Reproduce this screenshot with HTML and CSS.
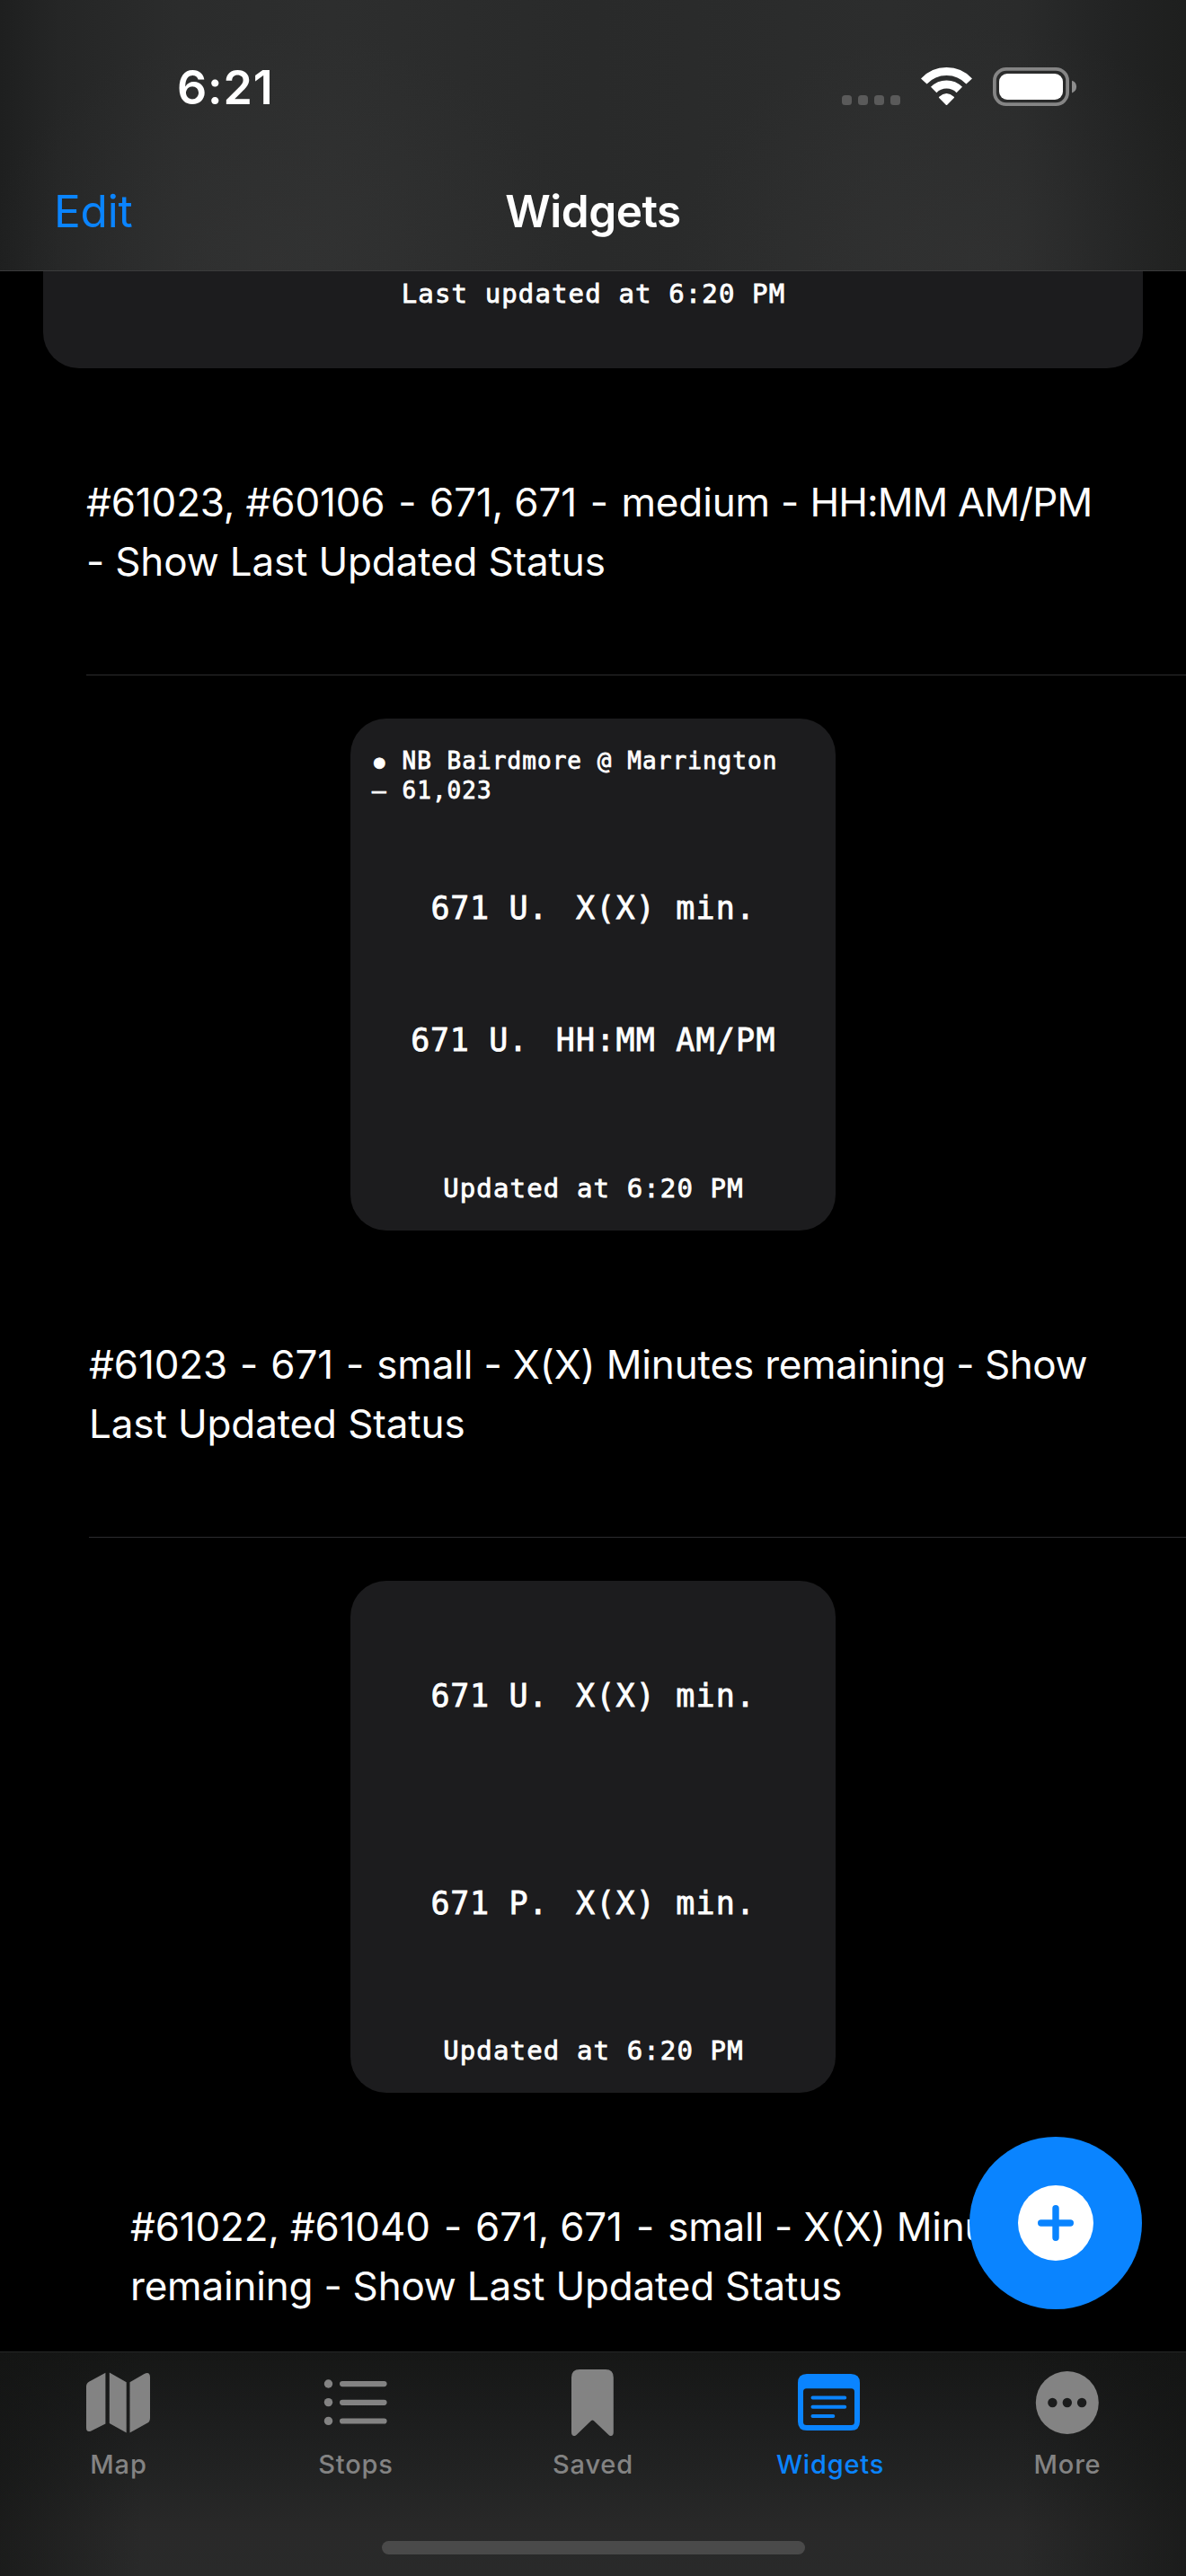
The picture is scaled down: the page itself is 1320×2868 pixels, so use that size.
FILE: index.html
```html
<!DOCTYPE html>
<html lang="en">
<head>
<meta charset="utf-8">
<title>Widgets</title>
<link rel="stylesheet" href="styles.css">
</head>
<body>
<div class="screen">
  <header class="top">
    <div class="status">
      <span class="clock">6:21</span>
      <svg class="status-icons" width="264" height="46" viewBox="936 73 264 46">
        <g fill="#5a5a5a">
          <rect x="937" y="106" width="11" height="11" rx="3.5"/>
          <rect x="955" y="106" width="11" height="11" rx="3.5"/>
          <rect x="973" y="106" width="11" height="11" rx="3.5"/>
          <rect x="991" y="106" width="11" height="11" rx="3.5"/>
        </g>
        <g transform="translate(1053.5 114)" fill="none" stroke="#fff" stroke-width="9">
          <path d="M-25.2-23.5A34.5 34.5 0 0 1 25.2-23.5"/>
          <path d="M-14.3-14A20 20 0 0 1 14.3-14"/>
          <path d="M-7.6-5.6Q0-12.2 7.6-5.6L0 2Z" fill="#fff" stroke-width="2" stroke-linejoin="round"/>
        </g>
        <rect x="1106.9" y="76.9" width="81.2" height="39.2" rx="13" fill="none" stroke="#858585" stroke-width="3.8"/>
        <rect x="1112" y="82" width="71" height="29" rx="9" fill="#fff"/>
        <path d="M1193 89.8a7.1 7.1 0 0 1 0 13.6z" fill="#8d8d8d"/>
      </svg>
    </div>
    <nav class="navbar">
      <a class="edit">Edit</a>
      <h1>Widgets</h1>
    </nav>
  </header>

  <main class="list">
    <section class="item first">
      <div class="card wide"><p class="updated">Last updated at 6:20 PM</p></div>
      <h2>#61023, #60106 <span class="dash">-</span> 671, 671 <span class="dash">-</span> medium - <span class="tail">HH:MM AM/PM</span><br>- Show Last Updated Status</h2>
    </section>
    <section class="item second">
      <div class="card small">
        <p class="stop"><span class="dot">●</span> NB Bairdmore @ Marrington<br>– 61,023</p>
        <div class="rows">
          <p class="row"><span class="bus">671 U.</span><span>X(X) min.</span></p>
          <p class="row"><span class="bus">671 U.</span><span>HH:MM AM/PM</span></p>
        </div>
        <p class="updated">Updated at 6:20 PM</p>
      </div>
      <h2>#61023 <span class="dash">-</span> 671 <span class="dash">-</span> small - X(X) Minutes <span class="tail">remaining - Show</span><br>Last Updated Status</h2>
    </section>
    <section class="item third">
      <div class="card small">
        <div class="rows tall">
          <p class="row"><span class="bus">671 U.</span><span>X(X) min.</span></p>
          <p class="row"><span class="bus">671 P.</span><span>X(X) min.</span></p>
        </div>
        <p class="updated">Updated at 6:20 PM</p>
      </div>
      <h2>#61022, #61040 <span class="dash">-</span> 671, 671 <span class="dash">-</span> small - X(X) Minutes<br>remaining - Show Last Updated Status</h2>
    </section>
    <button class="fab" aria-label="Add">
      <svg width="84" height="84" viewBox="0 0 84 84">
        <circle cx="42" cy="42" r="42" fill="#fff"/>
        <path d="M42 25.7v32.6M25.7 42h32.6" stroke="#0a84ff" stroke-width="7.4" stroke-linecap="round"/>
      </svg>
    </button>
  </main>

  <footer class="tabs">
    <div class="tab-row">
      <a class="tab">
        <svg viewBox="0 0 80 80"><path d="M25.4 6.8V63.6L9.5 71.4Q4 73.5 4 68V22Q4 18.5 7 16.7ZM29.8 6.4L48.7 17.2V73.4L29.8 63ZM52.5 17.2L68.5 8Q75 5 75 12V57Q75 61 72.3 62.6L52.5 73.4Z"/></svg>
        <span>Map</span>
      </a>
      <a class="tab">
        <svg viewBox="0 0 80 80"><circle cx="9.5" cy="19" r="4.7"/><circle cx="9.5" cy="39.6" r="4.7"/><circle cx="9.5" cy="60.4" r="4.7"/><rect x="22" y="16" width="52.6" height="6.2" rx="3.1"/><rect x="22" y="36.7" width="52.6" height="6.2" rx="3.1"/><rect x="22" y="57.4" width="52.6" height="6.2" rx="3.1"/></svg>
        <span>Stops</span>
      </a>
      <a class="tab">
        <svg viewBox="0 0 80 80"><path d="M25 3H54Q62.8 3 62.8 12V73C62.8 77 60 78.5 57 75.5L41 60.3Q39.4 58.9 37.8 60.3L22 75.5C19 78.5 16 77 16 73V12Q16 3 25 3Z"/></svg>
        <span>Saved</span>
      </a>
      <a class="tab active">
        <svg viewBox="0 0 80 80"><path fill-rule="evenodd" d="M14 8H63Q73 8 73 18V61Q73 71 63 71H14Q4 71 4 61V18Q4 8 14 8ZM13.5 24.3Q10 24.3 10 28V61.5Q10 65 13.5 65H63.5Q67 65 67 61.5V28Q67 24.3 63.5 24.3Z"/><path d="M20.5 34.4H56.2M20.5 44.8H56.2M20.5 55H43.3" stroke="currentColor" stroke-width="4" stroke-linecap="round"/></svg>
        <span>Widgets</span>
      </a>
      <a class="tab">
        <svg viewBox="0 0 80 80"><circle cx="39.8" cy="40" r="35"/><g fill="#1b1c1c"><circle cx="23.4" cy="40" r="5.2"/><circle cx="39.8" cy="40" r="5.2"/><circle cx="56.1" cy="40" r="5.2"/></g></svg>
        <span>More</span>
      </a>
    </div>
    <div class="home"></div>
  </footer>
</div>
</body>
</html>
```
FILE: styles.css
```css
* { box-sizing: border-box; margin: 0; padding: 0; }

body { background: #000; color: #fff; font-family: Inter, sans-serif; }

.screen {
  width: 1320px;
  height: 2868px;
  display: flex;
  flex-direction: column;
  overflow: hidden;
}

/* translucent navigation bar */
.top {
  flex: none;
  height: 302px;
  padding-top: 68px;
  border-bottom: 1px solid #3b3b3c;
  background:
    radial-gradient(ellipse 330px 260px at 310px 290px, rgba(60, 60, 60, .3), transparent),
    radial-gradient(ellipse 330px 260px at 1080px 290px, rgba(60, 60, 60, .3), transparent),
    linear-gradient(90deg, #1e1f1f, #252626 5%, #2b2c2c 15%, #2d2e2e 28%, #292a2a 50%, #2c2d2d 75%, #2a2b2b 86%, #222323 94%, #1e1f1e);
}

.status {
  height: 137px;
  padding: 0 120px 0 197px;
  display: flex;
  justify-content: space-between;
}

.clock { font-size: 52px; font-weight: 600; line-height: 60px; letter-spacing: .85px; }

.status-icons { margin-top: 5px; }

.navbar {
  display: grid;
  grid-template-columns: 1fr auto 1fr;
  padding: 0 60px;
  line-height: 60px;
  font-size: 49.5px;
}

.edit { color: #0a84ff; letter-spacing: -.18px; }

h1 { font-size: 49.5px; font-weight: 600; letter-spacing: -.44px; }

/* widget list */
.list {
  flex: 1;
  min-height: 0;
  position: relative;
  overflow: hidden;
}

.item { display: flow-root; }

.card { background: #1c1c1e; margin: 48px auto 0; }

.wide {
  width: 1224px;
  height: 108px;
  margin-top: 0;
  padding-top: 5px;
  border-radius: 0 0 40px 40px;
}

.small {
  width: 540px;
  height: 570px;
  border-radius: 40px;
  padding-bottom: 27px;
  display: flex;
  flex-direction: column;
}

.card p {
  font-family: "DejaVu Sans Mono", monospace;
  -webkit-text-stroke: .8px #fff;
  white-space: nowrap;
}

.card .stop {
  padding: 31px 24px 0;
  margin-bottom: 39px;
  height: 98px;
  font-size: 26px;
  line-height: 33.4px;
  letter-spacing: 1.07px;
}

.dot {
  display: inline-block;
  width: 16.7px;
  font-size: 20px;
  line-height: 20px;
  text-align: center;
  letter-spacing: 0;
  vertical-align: 1px;
}

.rows { display: grid; grid-auto-rows: 147px; }

.tall { grid-auto-rows: 231px; padding-top: 12px; }

.row {
  display: flex;
  justify-content: center;
  align-items: center;
  gap: 31px;
  padding-left: 1px;
  font-size: 35px;
  line-height: 44px;
  letter-spacing: 1.2px;
}

.bus { letter-spacing: .65px; }

.updated {
  margin-top: auto;
  padding-left: 1px;
  text-align: center;
  font-size: 29px;
  line-height: 40px;
  letter-spacing: 1.13px;
}

h2 {
  padding: 116px 0 93px;
  border-bottom: 1px solid #2c2c2e;
  font-size: 44px;
  font-weight: 400;
  line-height: 66px;
  letter-spacing: -.13px;
  white-space: nowrap;
}

.first h2 { margin-left: 96px; letter-spacing: -.16px; }
.second h2 { margin-left: 99px; }
.third h2 { margin-left: 145px; letter-spacing: -.2px; }

.first .dash { padding: 0 2.5px; }
.second .dash { padding: 0 1.8px; }
.third .dash { padding: 0 3px; }
.first .tail { letter-spacing: -.9px; }
.second .tail { letter-spacing: -.45px; }

.fab {
  position: absolute;
  right: 49px;
  bottom: 47px;
  width: 192px;
  height: 192px;
  border: 0;
  border-radius: 50%;
  background: #0a84ff;
  display: grid;
  place-items: center;
}

/* tab bar */
.tabs {
  flex: none;
  height: 250px;
  border-top: 1px solid #262727;
  background:
    linear-gradient(90deg, rgba(18, 19, 18, .6), transparent 12%, transparent 86%, rgba(18, 19, 18, .6)),
    linear-gradient(#161716, #1b1c1c 25%, #222323 55%, #292929 80%, #292a2a);
}

.tab-row {
  height: 210px;
  padding-top: 16px;
  display: grid;
  grid-template-columns: repeat(5, 1fr);
}

.tab {
  display: flex;
  flex-direction: column;
  align-items: center;
  gap: 11px;
  color: #838383;
  font-size: 29px;
  font-weight: 500;
  line-height: 36px;
  letter-spacing: .8px;
}

.tab svg { width: 80px; height: 80px; fill: currentColor; }

.active { color: #0a84ff; }

.home {
  width: 471px;
  height: 15px;
  margin: 0 auto;
  border-radius: 8px;
  background: #4a4a4a;
}
```
